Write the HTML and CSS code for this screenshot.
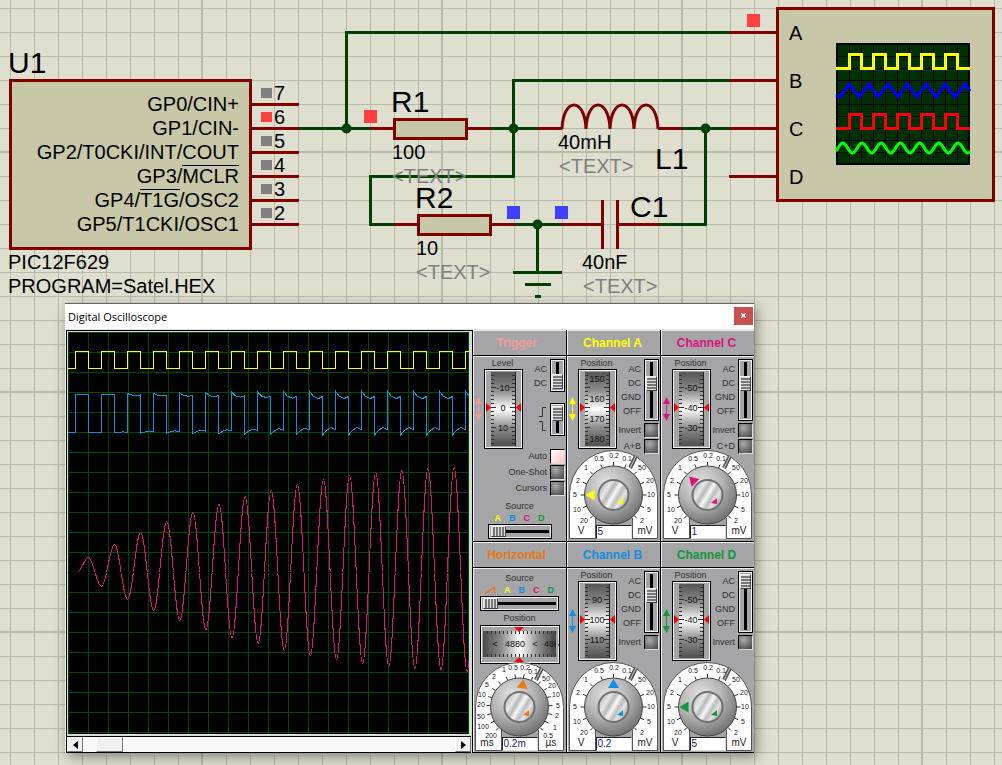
FILE: index.html
```html
<!DOCTYPE html>
<html lang="en">
<head>
<meta charset="utf-8">
<title>Digital Oscilloscope</title>
<link rel="stylesheet" href="styles.css">
</head>
<body>
<main class="sheet">
<svg class="schematic" role="img" aria-label="Schematic">
  <defs>
    <pattern id="minor" x="10" y="8" width="24" height="24" patternUnits="userSpaceOnUse">
      <path class="grid-line" d="M0 0h24v1H1v23H0z"/>
    </pattern>
    <pattern id="major" x="201" y="151" width="240" height="240" patternUnits="userSpaceOnUse">
      <path class="grid-line" d="M0 0h240v2H2v238H0z"/>
    </pattern>
    <pattern id="lcd" x="837" y="44" width="12" height="12" patternUnits="userSpaceOnUse">
      <path d="M0 0h12v1H1v11H0z"/>
    </pattern>
  </defs>
  <rect width="100%" height="100%" fill="url(#minor)"/>
  <rect width="100%" height="100%" fill="url(#major)"/>

  <g class="wire">
    <path d="M299 128.500H370M346.500 128.500V32.500H729M491 128.500H537M729 80.500H513.500V176.500H370.500V224.500H394M515 224.500H561M537.500 224.500V272.500M513 272.500H562M525 284.500H551M535 296.500H541M659 224.500H705.500V128.500M682 128.500H729"/>
  </g>
  <g class="junction">
    <circle cx="346.500" cy="128.500" r="5"/><circle cx="513.500" cy="128.500" r="5"/>
    <circle cx="705.500" cy="128.500" r="5"/><circle cx="537.500" cy="224.500" r="5"/>
  </g>

  <g class="part">
    <path d="M250 104.500H299M250 128.500H299M250 152.500H299M250 176.500H299M250 200.500H299M250 224.500H299"/>
    <rect x="10.500" y="80.500" width="240" height="168"/>
    <path d="M370 128.500H394M467 128.500H491M394 224.500H418M491 224.500H515M537 128.500H562M658 128.500H682M561 224.500H602M618 224.500H659M602.500 200V249M617.500 200V249"/>
    <path class="coil" d="M562 129C563 97 585 97 586 129C587 97 609 97 610 129C611 97 633 97 634 129C635 97 657 97 658 129"/>
    <rect x="394.500" y="119.500" width="72" height="19"/>
    <rect x="418.500" y="215.500" width="72" height="19"/>
    <path d="M729 32.500H777M729 80.500H777M729 128.500H777M729 176.500H777"/>
    <rect x="777.500" y="8.500" width="216" height="192"/>
  </g>

  <g fill="#808080">
    <rect x="261" y="88" width="11" height="10"/><rect x="261" y="136" width="11" height="10"/>
    <rect x="261" y="160" width="11" height="10"/><rect x="261" y="184" width="11" height="10"/>
    <rect x="261" y="208" width="11" height="10"/>
  </g>
  <g fill="#ff4040">
    <rect x="261" y="112" width="11" height="10"/><rect x="364" y="110" width="13" height="13"/><rect x="747" y="14" width="13" height="13"/>
  </g>
  <g fill="#4040ff">
    <rect x="507" y="206" width="13" height="13"/><rect x="555" y="206" width="13" height="13"/>
  </g>

  <g class="name">
    <text x="8" y="73">U1</text><text x="391" y="112">R1</text><text x="415" y="208">R2</text>
    <text x="655" y="169">L1</text><text x="630" y="217">C1</text>
  </g>
  <g class="value pin-name">
    <text x="239" y="111">GP0/CIN+</text><text x="239" y="135">GP1/CIN-</text>
    <text x="239" y="159">GP2/T0CKI/INT/COUT</text><text x="239" y="183">GP3/MCLR</text>
    <text x="239" y="207">GP4/T1G/OSC2</text><text x="239" y="231">GP5/T1CKI/OSC1</text>
  </g>
  <path d="M182 165.500H239M140 189.500H180" stroke="#000"/>
  <g class="value">
    <text x="274" y="100">7</text><text x="274" y="124">6</text><text x="274" y="148">5</text>
    <text x="274" y="172">4</text><text x="274" y="196">3</text><text x="274" y="220">2</text>
    <text x="8" y="269">PIC12F629</text><text x="8" y="293">PROGRAM=Satel.HEX</text>
    <text x="392" y="159">100</text><text x="416" y="255">10</text>
    <text x="558" y="149">40mH</text><text x="582" y="269">40nF</text>
    <text x="789" y="40">A</text><text x="789" y="88">B</text><text x="789" y="136">C</text><text x="789" y="184">D</text>
  </g>
  <g class="value hint">
    <text x="392" y="183">&lt;TEXT&gt;</text><text x="416" y="279">&lt;TEXT&gt;</text>
    <text x="559" y="173">&lt;TEXT&gt;</text><text x="583" y="293">&lt;TEXT&gt;</text>
  </g>

  <rect x="837" y="44" width="132" height="120" fill="#003000"/>
  <rect x="837" y="44" width="132" height="120" fill="url(#lcd)" stroke="#000" stroke-width="2"/>
  <g fill="none" stroke-width="3">
    <path stroke="#ffff00" d="M836 68.500H849.500V54.500H861.500V68.500H873.500V54.500H885.500V68.500H897.500V54.500H909.500V68.500H921.500V54.500H933.500V68.500H945.500V54.500H957.500V68.500H970"/>
    <path stroke="#ff0000" d="M836 128.500H849.500V114.500H861.500V128.500H873.500V114.500H885.500V128.500H897.500V114.500H909.500V128.500H921.500V114.500H933.500V128.500H945.500V114.500H957.500V128.500H970"/>
    <path stroke="#0000ff" d="M836 95L840 97L849 84L859 97L869 84L878 97L888 84L898 97L907 84L917 97L926 84L936 97L945 84L955 97L965 84L970 91"/>
    <path id="lcd-sine" stroke="#00ff00"/>
  </g>
</svg>

<svg width="0" height="0" class="symbols" aria-hidden="true">
  <defs>
    <linearGradient id="cylV" x1="0" y1="0" x2="0" y2="1">
      <stop offset="0" stop-color="#555"/><stop offset=".25" stop-color="#8c8c8c"/><stop offset=".5" stop-color="#fff"/><stop offset=".75" stop-color="#8c8c8c"/><stop offset="1" stop-color="#505050"/>
    </linearGradient>
    <linearGradient id="cylH" x1="0" y1="0" x2="1" y2="0">
      <stop offset="0" stop-color="#4a4a4a"/><stop offset=".25" stop-color="#8c8c8c"/><stop offset=".5" stop-color="#fff"/><stop offset=".75" stop-color="#8c8c8c"/><stop offset="1" stop-color="#404040"/>
    </linearGradient>
    <radialGradient id="knob" cx=".38" cy=".3" r=".75">
      <stop offset="0" stop-color="#e4e4e4"/><stop offset=".5" stop-color="#b4b4b4"/><stop offset="1" stop-color="#6c6c6c"/>
    </radialGradient>
    <linearGradient id="cap" x1="0" y1=".1" x2="1" y2=".7">
      <stop offset="0" stop-color="#a8a8a8"/><stop offset=".3" stop-color="#e8e8e8"/><stop offset=".42" stop-color="#b8b8b8"/><stop offset=".55" stop-color="#f8f8f8"/><stop offset=".68" stop-color="#bcbcbc"/><stop offset=".8" stop-color="#e4e4e4"/><stop offset="1" stop-color="#a0a0a0"/>
    </linearGradient>
    <symbol id="arrows" viewBox="0 0 7 24"><path fill="currentColor" d="M3.500 0L7 7H4V17H7L3.500 24L0 17H3V7H0z"/></symbol>
    <symbol id="drum" viewBox="0 0 39 80">
      <rect x="0" y="0" width="39" height="80" fill="#000"/><path d="M2 2H38V79H1V78H37V3H2z" fill="#f0f0f0"/>
      <rect x="1.500" y="1.500" width="36" height="77" fill="#a5a4a6" stroke="#f0f0f0"/>
      <rect x="7" y="3" width="25" height="74" fill="url(#cylV)"/>
      <path d="M31.500 3V77" stroke="#222"/>
      <path class="tick" d="M7 6.500h3M7 10.500h3M7 14.500h3M7 18.500h5M7 22.500h3M7 26.500h3M7 30.500h3M7 34.500h3M7 38.500h5M7 42.500h3M7 46.500h3M7 50.500h3M7 54.500h3M7 58.500h5M7 62.500h3M7 66.500h3M7 70.500h3M7 74.500h3M31 6.500h-3M31 10.500h-3M31 14.500h-3M31 18.500h-5M31 22.500h-3M31 26.500h-3M31 30.500h-3M31 34.500h-3M31 38.500h-5M31 42.500h-3M31 46.500h-3M31 50.500h-3M31 54.500h-3M31 58.500h-5M31 62.500h-3M31 66.500h-3M31 70.500h-3M31 74.500h-3"/>
      <path fill="#f00" d="M2 34V43L7 38.500zM37 34V43L32 38.500z"/>
    </symbol>
    <symbol id="arch" viewBox="0 0 89 90">
      <path fill="#fff" stroke="#555" d="M.500 88.500V44.500A44 44 0 0 1 88.500 44.500V88.500H63.500V72L44.500 60L26.500 72V88.500z"/>
      <path d="M26.500 66H63.500V90H26.500z" fill="#a5a4a6"/>
      <path d="M26.500 68V89M63.500 68V89" stroke="#555"/>
    </symbol>
    <symbol id="knobs" viewBox="0 0 89 90">
      <path d="M61 18L67 6" stroke="#555" stroke-width="4"/><path d="M61 18L67 6" stroke="#ccc" stroke-width="1"/>
      <circle cx="44.500" cy="45" r="29" fill="url(#knob)" stroke="#444"/>
      <circle cx="44.500" cy="45" r="15" fill="url(#cap)" stroke="#707070" stroke-width="2"/>
      <path fill="currentColor" d="M48 53L54 48L54 54z"/>
    </symbol>
    <symbol id="dial-volts" viewBox="0 0 89 90">
      <use href="#arch"/>
      <path id="ticks-volts" class="tick"/>
      <g class="scale">
        <text x="15" y="73">20</text><text x="8" y="62">10</text><text x="6" y="47">5</text><text x="9" y="33">2</text><text x="17" y="20">1</text><text x="30" y="11">0.5</text><text x="45" y="8">0.2</text><text x="58" y="11">0.1</text><text x="73" y="20">50</text><text x="81" y="33">20</text><text x="82" y="47">10</text><text x="80" y="62">5</text><text x="73" y="73">2</text>
      </g>
      <g class="unit"><text x="12" y="84">V</text><text x="76" y="84">mV</text></g>
      <use href="#knobs"/>
    </symbol>
    <symbol id="dial-time" viewBox="0 0 89 90">
      <use href="#arch"/>
      <path id="ticks-time" class="tick"/>
      <g class="scale">
        <text x="16" y="76">200</text><text x="8" y="67">100</text><text x="6" y="57">50</text><text x="6" y="45">20</text><text x="7" y="35">10</text><text x="12" y="25">5</text><text x="19" y="17">2</text><text x="29" y="10">1</text><text x="38" y="8">0.5</text><text x="50" y="8">0.2</text><text x="58" y="12">0.1</text><text x="71" y="19">50</text><text x="77" y="26">20</text><text x="81" y="35">10</text><text x="83" y="46">5</text><text x="82" y="56">2</text><text x="80" y="68">1</text><text x="73" y="76">0.5</text>
      </g>
      <g class="unit"><text x="12" y="84">ms</text><text x="76" y="84">µs</text></g>
      <use href="#knobs"/>
    </symbol>
  </defs>
</svg>

<section class="window" aria-label="Digital Oscilloscope">
  <header class="titlebar"><h1>Digital Oscilloscope</h1><button class="close" aria-label="Close"><svg width="5" height="5" viewBox="0 0 5 5"><path d="M0 0L5 5M5 0L0 5" stroke="#fff" stroke-width="1.400"/></svg></button></header>
  <div class="workspace">
    <div class="display">
      <svg class="plot" viewBox="0 0 401 402" role="img" aria-label="Channel traces">
        <defs><pattern id="cells" width="20" height="20" patternUnits="userSpaceOnUse"><path fill="#004a00" d="M0 0h20v1H1v19H0z"/></pattern></defs>
        <rect width="402" height="402" fill="#000"/><rect width="402" height="402" fill="url(#cells)"/>
        <path id="trace-c" class="trace channel-c"/>
        <path id="trace-b" class="trace channel-b"/>
        <path id="trace-a" class="trace channel-a"/>
        <path class="trace" stroke="#00c83c" d="M0 240.500H402"/>
      </svg>
      <div class="scrollbar">
        <button aria-label="Scroll left"><svg width="5" height="8" viewBox="0 0 5 8"><path d="M5 0V8L0 4z"/></svg></button>
        <div class="track"><div class="thumb"></div></div>
        <button aria-label="Scroll right"><svg width="5" height="8" viewBox="0 0 5 8"><path d="M0 0V8L5 4z"/></svg></button>
      </div>
    </div>

    <div class="panels">
      <section class="panel trigger">
        <h2>Trigger</h2>
        <div class="top">
          <div class="position"><span class="caption">Level</span>
            <div class="fader"><svg class="arrows"><use href="#arrows"/></svg><svg class="drum" viewBox="0 0 39 80"><use href="#drum"/><text x="19" y="22">-10</text><text x="19" y="42">0</text><text x="19" y="62">10</text></svg></div>
          </div>
          <div class="switches">
            <div class="mode"><div class="choices"><span>AC</span><span>DC</span></div><input class="slide short" type="range" min="0" max="1" value="1" aria-label="Trigger coupling"></div>
            <div class="mode edge"><svg width="8" height="27" viewBox="0 0 8 27"><path d="M0 10.500H3.500V1.500H7M0 15.500H3.500V24.500H7" fill="none" stroke="#333"/></svg><input class="slide short" type="range" min="0" max="1" value="0" aria-label="Trigger edge"></div>
          </div>
        </div>
        <div class="options">
          <label>Auto<input type="checkbox" checked></label>
          <label>One-Shot<input type="checkbox"></label>
          <label>Cursors<input type="checkbox"></label>
        </div>
        <div class="source"><span>Source</span><div class="letters"><b class="channel-a">A</b><b class="channel-b">B</b><b class="channel-c">C</b><b class="channel-d">D</b></div><input class="across" type="range" min="0" max="3" value="0" aria-label="Trigger source"></div>
      </section>

      <section class="panel channel-a">
        <h2>Channel A</h2>
        <div class="top">
          <div class="position"><span class="caption">Position</span>
            <div class="fader"><svg class="arrows"><use href="#arrows"/></svg><svg class="drum" viewBox="0 0 39 80"><use href="#drum"/><text x="19" y="13">150</text><text x="19" y="33">160</text><text x="19" y="53">170</text><text x="19" y="73">180</text></svg></div>
          </div>
          <div class="switches">
            <div class="mode"><div class="choices"><span>AC</span><span>DC</span><span>GND</span><span>OFF</span></div><input class="slide" type="range" min="0" max="3" value="1" aria-label="Channel A coupling"></div>
            <label>Invert<input type="checkbox"></label><label>A+B<input type="checkbox"></label>
          </div>
        </div>
        <div class="dial"><svg viewBox="0 0 89 90"><use href="#dial-volts"/><path class="pointer" transform="rotate(-90 44.500 45)" d="M44.500 17L50 26H39z"/></svg><input type="text" value="5" aria-label="Channel A volts per division"></div>
      </section>

      <section class="panel channel-c">
        <h2>Channel C</h2>
        <div class="top">
          <div class="position"><span class="caption">Position</span>
            <div class="fader"><svg class="arrows"><use href="#arrows"/></svg><svg class="drum" viewBox="0 0 39 80"><use href="#drum"/><text x="19" y="22">-50</text><text x="19" y="42">-40</text><text x="19" y="62">-30</text></svg></div>
          </div>
          <div class="switches">
            <div class="mode"><div class="choices"><span>AC</span><span>DC</span><span>GND</span><span>OFF</span></div><input class="slide" type="range" min="0" max="3" value="1" aria-label="Channel C coupling"></div>
            <label>Invert<input type="checkbox"></label><label>C+D<input type="checkbox"></label>
          </div>
        </div>
        <div class="dial"><svg viewBox="0 0 89 90"><use href="#dial-volts"/><path class="pointer" transform="rotate(-45 44.500 45)" d="M44.500 19L50 28H39z"/></svg><input type="text" value="1" aria-label="Channel C volts per division"></div>
      </section>

      <section class="panel horizontal">
        <h2>Horizontal</h2>
        <div class="timebase">
          <div class="source wide"><span>Source</span><div class="letters"><svg width="11" height="7" viewBox="0 0 11 7"><path d="M0 6.500L9.500 .500V7" fill="none" stroke="currentColor" stroke-width="1.500"/></svg><b class="channel-a">A</b><b class="channel-b">B</b><b class="channel-c">C</b><b class="channel-d">D</b></div><input class="across" type="range" min="0" max="4" value="0" aria-label="Horizontal source"></div>
          <span class="caption">Position</span>
          <svg class="wheel" viewBox="0 0 80 39">
            <rect width="80" height="39"/><rect x="1.500" y="1.500" width="77" height="36" fill="#a5a4a6" stroke="#f0f0f0"/>
            <rect x="3" y="6" width="74" height="26" fill="url(#cylH)"/>
            <path class="tick" id="ticks-wheel"/>
            <text x="15" y="22">&lt;</text><text x="35" y="22">4880</text><text x="55" y="22">&lt;</text><text x="64" y="22" class="start">486</text><path d="M77 3V36" stroke="#a5a4a6" stroke-width="2"/>
            <path fill="#f00" d="M34 2H44L39 7zM34 37H44L39 32z"/>
          </svg>
        </div>
        <div class="dial"><svg viewBox="0 0 89 90"><use href="#dial-time"/><path class="pointer" transform="rotate(8 44.500 45)" d="M44.500 17L50 26H39z"/></svg><input type="text" value="0.2m" aria-label="Time per division"></div>
      </section>

      <section class="panel channel-b">
        <h2>Channel B</h2>
        <div class="top">
          <div class="position"><span class="caption">Position</span>
            <div class="fader"><svg class="arrows"><use href="#arrows"/></svg><svg class="drum" viewBox="0 0 39 80"><use href="#drum"/><text x="19" y="22">90</text><text x="19" y="42">100</text><text x="19" y="62">110</text></svg></div>
          </div>
          <div class="switches">
            <div class="mode"><div class="choices"><span>AC</span><span>DC</span><span>GND</span><span>OFF</span></div><input class="slide" type="range" min="0" max="3" value="1" aria-label="Channel B coupling"></div>
            <label>Invert<input type="checkbox"></label>
          </div>
        </div>
        <div class="dial"><svg viewBox="0 0 89 90"><use href="#dial-volts"/><path class="pointer" d="M44.500 17L50 26H39z"/></svg><input type="text" value="0.2" aria-label="Channel B volts per division"></div>
      </section>

      <section class="panel channel-d">
        <h2>Channel D</h2>
        <div class="top">
          <div class="position"><span class="caption">Position</span>
            <div class="fader"><svg class="arrows"><use href="#arrows"/></svg><svg class="drum" viewBox="0 0 39 80"><use href="#drum"/><text x="19" y="22">-50</text><text x="19" y="42">-40</text><text x="19" y="62">-30</text></svg></div>
          </div>
          <div class="switches">
            <div class="mode"><div class="choices"><span>AC</span><span>DC</span><span>GND</span><span>OFF</span></div><input class="slide" type="range" min="0" max="3" value="0" aria-label="Channel D coupling"></div>
            <label>Invert<input type="checkbox"></label>
          </div>
        </div>
        <div class="dial"><svg viewBox="0 0 89 90"><use href="#dial-volts"/><path class="pointer" transform="rotate(-90 44.500 45)" d="M44.500 17L50 26H39z"/></svg><input type="text" value="5" aria-label="Channel D volts per division"></div>
      </section>
    </div>
  </div>
</section>
</main>
<script src="traces.js"></script>
</body>
</html>
```
FILE: styles.css
```css
* { box-sizing: border-box; }
body { margin: 0; font-family: "Liberation Sans", Arial, sans-serif; }
.sheet { position: relative; min-height: 100vh; overflow: hidden; background: #dfdfd0; }
.schematic { display: block; width: 100%; height: 100vh; }
.symbols { position: absolute; }
.grid-line { fill: #babaaa; }

.wire { fill: none; stroke: #004000; stroke-width: 3; }
.junction { fill: #004000; }
.part { fill: none; stroke: #800000; stroke-width: 3; }
.part rect { fill: #c8c8a8; }
.name { font-size: 30px; }
.value { font-size: 20px; }
.pin-name { text-anchor: end; }
.hint { fill: #808080; }

.channel-a { color: #ffff00; }
.channel-b { color: #1090e0; }
.channel-c { color: #e0107c; }
.channel-d { color: #109840; }
.trigger { color: #f098a0; }
.horizontal { color: #e87818; }

/* floating instrument window */
.window { position: absolute; left: 65px; top: 303px; width: 689px; border-top: 1px solid #666; background: #f4f4f4; box-shadow: 3px 4px 12px rgba(0, 0, 0, .4); }
.titlebar { display: flex; justify-content: space-between; align-items: center; height: 25px; padding: 0 1px 0 3px; background: #fff; }
.titlebar h1 { margin: 0; font: 11px "Open Sans", "Noto Sans", sans-serif; color: #000; }
.close { display: grid; place-items: center; width: 19px; height: 18px; margin-bottom: 2px; padding: 0; border: 0; background: #c75050; }
.workspace { display: flex; border-top: 1px solid #e0e0e0; }
.display { flex: 1; min-width: 0; margin-left: 1px; background: #d8d8d8; border-left: 1px solid #000; border-top: 1px solid #000; }
.plot { display: block; width: 401px; height: 402px; margin: 1px 0 2px 1px; }
.trace { fill: none; stroke: currentColor; shape-rendering: crispEdges; }
.scrollbar { display: flex; height: 17px; margin-right: 1px; border: solid #000; border-width: 1px 0; }
.scrollbar button { display: grid; place-items: center; width: 16px; padding: 0; background: #f0f0f0; border: 1px solid #fff; border-right-color: #777; border-bottom-color: #777; }
.track { flex: 1; padding-left: 13px; background: #f8f8f8; }
.thumb { width: 27px; height: 100%; background: #f0f0f0; border: 1px solid #fff; border-right-color: #777; border-bottom-color: #777; }

.panels { display: grid; grid-template-columns: repeat(3, 94px); }
.panel { height: 212px; border-left: 1px solid #000; border-bottom: 1px solid #000; background: #a5a4a6; box-shadow: inset 1px 1px #eee; font-size: 9px; line-height: 14px; }
.panel:nth-child(n+4) { height: 211px; }
.panel h2 { height: 26px; margin: 0; padding-right: 2px; border-bottom: 1px solid #000; font-size: 12px; line-height: 26px; text-align: center; }
.panel.trigger h2, .panel.horizontal h2 { padding-right: 6px; }
.panel span, .panel label { color: #303030; }
.top { display: flex; height: 98px; border-top: 1px solid #eee; }
.position { width: 50px; padding-left: 2px; }
.caption { display: block; padding-left: 7px; line-height: 12px; text-align: center; white-space: nowrap; }
.fader { display: flex; gap: 2px; align-items: center; }
.arrows { width: 7px; height: 24px; }
.drum { width: 39px; height: 80px; }
.drum text, .wheel text { font-size: 9px; text-anchor: middle; fill: #111; }
.wheel .start { text-anchor: start; }
.tick { fill: none; stroke: #303030; }
.switches { flex: 1; min-width: 0; padding: 2px 1px 0 0; }
.mode { display: flex; justify-content: flex-end; gap: 3px; margin-bottom: 1px; }
.choices { display: flex; flex-direction: column; padding-top: 3px; text-align: right; }
.edge { align-items: center; margin-top: 11px; }
label { display: flex; justify-content: flex-end; align-items: center; gap: 3px; height: 16px; }
input[type="checkbox"] { appearance: none; flex: none; width: 15px; height: 15px; margin: 0; border: 1px solid #000; border-right-color: #ddd; border-bottom-color: #ddd; background: radial-gradient(circle at 35% 30%, #aaa, #606060 70%, #444); }
input[type="checkbox"]:checked { background: linear-gradient(135deg, #fff, #ffc0c4); }

input[type="range"] { appearance: none; margin: 0; border: 1px solid #000; outline: 1px solid #eee; outline-offset: -2px; background: #a5a4a6; }
.slide { writing-mode: vertical-lr; width: 15px; height: 62px; padding: 2px; }
.slide.short { height: 33px; }
.slide::-webkit-slider-runnable-track { background: linear-gradient(90deg, transparent 4px, #000 4px 7px, transparent 7px); }
.slide::-webkit-slider-thumb { appearance: none; width: 11px; height: 15px; border: 1px solid #eee; border-right-color: #444; border-bottom-color: #444; background: repeating-linear-gradient(#ddd 0 1px, #777 1px 3px); }
.across { display: block; width: 64px; height: 15px; padding: 2px; }
.across::-webkit-slider-runnable-track { background: linear-gradient(transparent 4px, #000 4px 7px, transparent 7px); }
.across::-webkit-slider-thumb { appearance: none; width: 15px; height: 11px; border: 1px solid #eee; border-right-color: #444; border-bottom-color: #444; background: repeating-linear-gradient(90deg, #ddd 0 1px, #777 1px 3px); }

.options { margin: -6px 1px 0 0; }
.source { display: flex; flex-direction: column; align-items: center; padding-top: 5px; }
.source > span { line-height: 11px; }
.letters { display: flex; justify-content: center; gap: 8px; height: 12px; line-height: 12px; }
.letters svg { align-self: center; }
.timebase { display: flex; flex-direction: column; align-items: center; height: 98px; padding-top: 0; border-top: 1px solid #eee; }
.wide { padding-top: 4px; }
.wide .across { width: 79px; }
.timebase > .caption { padding: 0; line-height: 14px; }
.wheel { width: 80px; height: 39px; }

.dial { display: grid; justify-content: center; margin-top: -4px; }
.dial > * { grid-area: 1 / 1; }
.dial > svg { width: 89px; height: 90px; }
.dial input { align-self: end; justify-self: center; width: 36px; height: 14px; margin-bottom: 1px; padding: 0 1px 1px; border: 1px solid #222; border-right-color: #ddd; border-bottom-color: #ddd; background: #fff; color: #202080; font: 10px "Liberation Sans", Arial, sans-serif; }
.pointer { fill: currentColor; }
.scale { font-size: 7px; text-anchor: middle; fill: #222; }
.unit { font-size: 10px; text-anchor: middle; fill: #222; }
```
FILE: traces.js
```js
const set = (id, d) => document.getElementById(id).setAttribute('d', d);
const PERIOD = 26;

// Channel A: square wave
let a = 'M0 36.5';
// Channel B: square wave with droop that grows over time
let b = 'M0 100.5';
for (let n = 0; n < 16; n++) {
  const x = 7.5 + n * PERIOD;
  const k = Math.min(1, n / 9);
  a += `H${x}V19.5H${x + 13}V36.5`;
  b += `H${x}L${x} ${62.5 - 3.5 * k}L${x + 4} ${62.5 + 2 * k}L${x + 9} ${62.5 + 4 * k}L${x + 13} ${62.5 + 2 * k}`;
  b += `V${100.5 + 2.5 * k}L${x + 17} ${100.5 - 2 * k}L${x + 21} ${100.5 - 5 * k}L${x + 26} ${100.5 - 3 * k}`;
}
set('trace-a', a);
set('trace-b', b);

// Channel C: resonance building up, given by its successive peaks
const peaks = [15, -14, 28, -27, 40, -38, 51, -48, 60, -57, 68, -65, 76, -71, 82, -78, 88, -83, 93, -87, 97, -91, 100, -94, 102, -96, 104, -97, 105, -99, 105];
let px = 9, py = 240.5;
let c = `M${px} ${py}`;
peaks.forEach((p, i) => {
  const x = 20.4 + i * 13.06, y = 240.5 - p, h = (x - px) * 0.364;
  c += `C${px + h} ${py} ${x - h} ${y} ${x} ${y}`;
  px = x; py = y;
});
set('trace-c', c);

let s = 'M836 148';
for (let x = 837; x <= 970; x++) s += `L${x} ${148 - 5 * Math.sin((x - 838) / 19.2 * 2 * Math.PI)}`;
set('lcd-sine', s);

function ring(steps) {
  let d = '';
  for (let i = 0; i <= steps; i++) {
    const t = (-135 + i * 270 / steps) * Math.PI / 180;
    d += `M${44.5 + 29 * Math.sin(t)} ${45 - 29 * Math.cos(t)}L${44.5 + 33 * Math.sin(t)} ${45 - 33 * Math.cos(t)}`;
  }
  return d;
}
set('ticks-volts', ring(12));
set('ticks-time', ring(17));

let w = '';
for (let x = 7; x < 77; x += 4) w += `M${x + .5} 6v3M${x + .5} 32v-3`;
set('ticks-wheel', w);
```
